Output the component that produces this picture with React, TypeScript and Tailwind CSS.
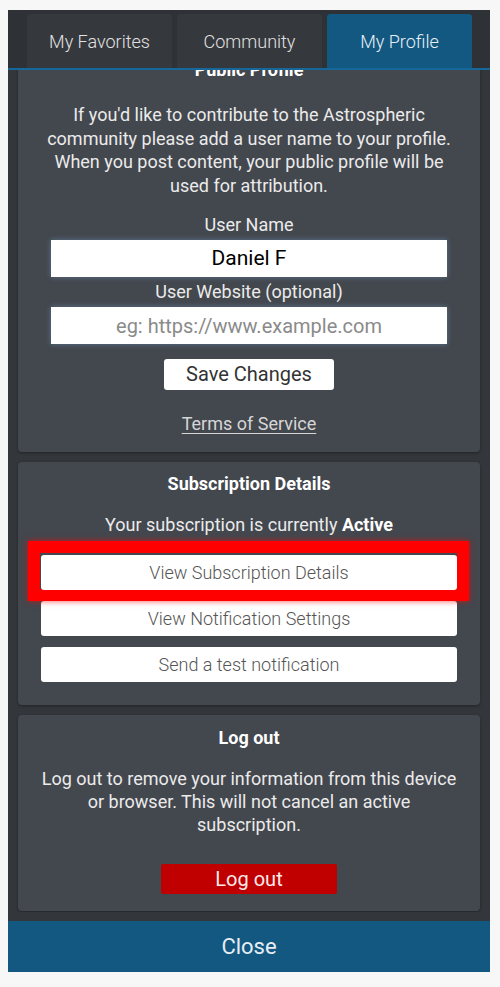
import React from 'react'

const tabs = ['My Favorites', 'Community', 'My Profile']

function Card({ children, className = '' }: { children: React.ReactNode; className?: string }) {
    return (
        <div className={`bg-[#43474e] rounded-[4px] shadow-[0_1px_3px_rgba(0,0,0,0.35)] text-center ${className}`}>
            {children}
        </div>
    )
}

function WhiteButton({ label }: { label: string }) {
    return (
        <button className="w-full h-[35px] bg-white rounded-[3px] text-[18px] font-light text-[#555] leading-[35px]">
            {label}
        </button>
    )
}

export default function App() {
    return (
        <div className="h-[987px] bg-[#f7f7f7] pt-[10px] pl-[8px] pr-[10px] font-['Roboto',sans-serif]">
            <div className="h-[962px] bg-[#33373b] flex flex-col overflow-hidden">
                {/* tab bar */}
                <div className="flex gap-[5px] pl-[19px] pt-[4px] bg-[#2e3135] border-b-2 border-[#16679a]">
                    {tabs.map((t, i) => (
                        <div
                            key={t}
                            className={`w-[145px] h-[54px] rounded-t-[3px] flex items-center justify-center text-[18px] font-light ${i === 2 ? 'bg-[#135881] text-[#e8f0f6]' : 'bg-[#35383d] text-[#e2e2e2]'}`}
                        >
                            {t}
                        </div>
                    ))}
                </div>

                {/* scrolled content */}
                <div className="flex-1 overflow-hidden px-[10px]">
                    <div className="-mt-[22px] flex flex-col gap-[10px]">
                        <Card className="pt-[10px] pb-[16px] px-[10px]">
                            <div className="text-[18px] leading-[24px] font-bold text-white">Public Profile</div>
                            <p className="mt-[21px] px-[14px] text-[18px] leading-[23.5px] text-[#ebebeb]">
                                If you'd like to contribute to the Astrospheric community please add a user name to your profile. When you post content, your public profile will be used for attribution.
                            </p>
                            <div className="mt-[16px] text-[18px] leading-[24px] text-[#ebebeb]">User Name</div>
                            <div className="mx-[23px] mt-[3px] h-[37px] bg-white shadow-[0_0_6px_rgba(120,170,220,0.45)] flex items-center justify-center text-[21px] text-black">
                                Daniel F
                            </div>
                            <div className="mt-[3px] text-[18px] leading-[24px] text-[#ebebeb]">User Website (optional)</div>
                            <div className="mx-[23px] mt-[3px] h-[37px] bg-white shadow-[0_0_6px_rgba(120,170,220,0.45)] flex items-center justify-center text-[20px] text-[#8a8a8a]">
                                eg: https://www.example.com
                            </div>
                            <div className="mt-[15px] flex justify-center">
                                <button className="w-[170px] h-[31px] bg-white rounded-[3px] text-[20px] leading-[31px] text-[#333]">
                                    Save Changes
                                </button>
                            </div>
                            <div className="mt-[22px] text-[18px] leading-[24px] text-[#d6d6d6] underline underline-offset-[3px]">
                                Terms of Service
                            </div>
                        </Card>

                        <Card className="pt-[10px] pb-[23px] px-[23px]">
                            <div className="text-[18px] leading-[24px] font-bold text-white">Subscription Details</div>
                            <div className="mt-[17px] text-[18px] leading-[24px] text-[#ebebeb]">
                                Your subscription is currently <b className="text-white">Active</b>
                            </div>
                            <div className="mt-[18px] flex flex-col gap-[11px]">
                                <div className="relative">
                                    <div className="absolute left-[-13px] right-[-12px] top-[-14px] bottom-[-11px] border-[12px] border-[#ff0000] shadow-[0_0_6px_rgba(255,0,0,0.7)]" />
                                    <div className="relative">
                                        <WhiteButton label="View Subscription Details" />
                                    </div>
                                </div>
                                <WhiteButton label="View Notification Settings" />
                                <WhiteButton label="Send a test notification" />
                            </div>
                        </Card>

                        <Card className="pt-[11px] pb-[17px] px-[10px]">
                            <div className="text-[18px] leading-[24px] font-bold text-white">Log out</div>
                            <p className="mt-[17px] text-[18px] leading-[23px] text-[#ebebeb] px-[8px]">
                                Log out to remove your information from this device or browser. This will not cancel an active subscription.
                            </p>
                            <div className="mt-[28px] flex justify-center">
                                <button className="w-[176px] h-[30px] bg-[#c00000] rounded-[2px] text-[20px] leading-[30px] text-[#fbeaea]">
                                    Log out
                                </button>
                            </div>
                        </Card>
                    </div>
                </div>

                {/* close bar */}
                <div className="h-[51px] mt-[9px] bg-[#135881] flex items-center justify-center text-[22px] text-[#e6eef4]">
                    Close
                </div>
            </div>
        </div>
    )
}
